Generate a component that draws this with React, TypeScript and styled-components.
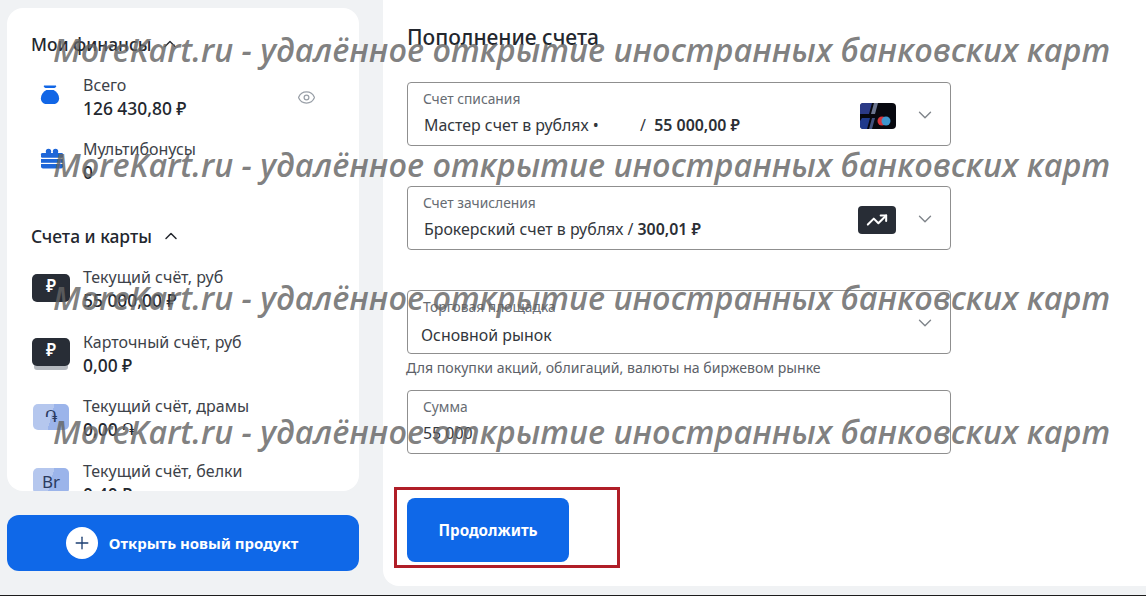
import styled, { createGlobalStyle } from "styled-components";
import { ChevronDown, ChevronUp, Eye, Plus, TrendingUp } from "lucide-react";

const GlobalStyle = createGlobalStyle`
  html, body {
    margin: 0;
    padding: 0;
    background: #fff;
    overflow: hidden;
  }
  * {
    box-sizing: border-box;
  }
  body {
    font-family: "Noto Sans", "Open Sans", sans-serif;
    color: #23272e;
  }
`;

const Page = styled.div`
  position: relative;
  width: 1146px;
  height: 596px;
  display: flex;
  gap: 24px;
  padding-left: 7px;
  background: #f0f2f4;
  border-bottom: 1px solid #1c1c1c;
  overflow: hidden;
`;

const Sidebar = styled.aside`
  width: 352px;
  padding-top: 8px;
  display: flex;
  flex-direction: column;
  gap: 24px;
`;

const Card = styled.div`
  height: 483px;
  padding: 24px 24px 0;
  background: #fff;
  border-radius: 16px;
  overflow: hidden;
`;

const SectionTitle = styled.div`
  display: flex;
  align-items: center;
  gap: 9px;
  height: 24px;
  font-size: 17.4px;
  font-weight: 500;
  color: #23272e;
`;

const Rows = styled.div<{ $gap: number }>`
  display: flex;
  flex-direction: column;
  gap: ${(p) => p.$gap}px;
  margin-top: 18px;
`;

const Row = styled.div`
  height: 46px;
  display: flex;
  align-items: flex-start;
`;

const IconSlot = styled.div<{ $inset?: boolean }>`
  width: 52px;
  flex: none;
  height: 46px;
  display: flex;
  align-items: center;
  padding-left: ${(p) => (p.$inset ? 9 : 1)}px;
  padding-bottom: ${(p) => (p.$inset ? 4 : 0)}px;
`;

const RowText = styled.div`
  flex: 1;
`;

const RowLabel = styled.div`
  font-size: 16px;
  line-height: 22px;
  color: #3d4249;
`;

const RowValue = styled.div`
  font-size: 17.4px;
  line-height: 24px;
  font-weight: 500;
  color: #23272e;
`;

const EyeButton = styled.div`
  width: 38px;
  height: 46px;
  display: flex;
  align-items: center;
  color: #9aa0a8;
`;

const AccountsBlock = styled.div`
  margin-top: 40px;
`;

const AccountRows = styled(Rows)`
  margin-top: 18px;
  gap: 18.6px;
`;

const Tile = styled.div<{ $light?: boolean; $stack?: boolean }>`
  position: relative;
  width: ${(p) => (p.$light ? 36 : 38)}px;
  height: ${(p) => (p.$light ? 26 : 28)}px;
  margin-left: ${(p) => (p.$light ? 1 : 0)}px;
  margin-bottom: 3px;
  padding-bottom: ${(p) => (p.$light ? 0 : 5)}px;
  border-radius: 5px;
  display: flex;
  align-items: center;
  justify-content: center;
  font-size: 17px;
  font-weight: ${(p) => (p.$light ? 400 : 600)};
  color: ${(p) => (p.$light ? "#2a3a5e" : "#fff")};
  background: ${(p) =>
    p.$light
      ? "linear-gradient(105deg, #b5c7ee 0 50%, #9bb4ea 50% 100%)"
      : "#282d36"};
  box-shadow: ${(p) => (p.$stack ? "0 6px 0 -2px #b4b8be" : "none")};
`;

const NewProduct = styled.button`
  height: 56px;
  border: none;
  border-radius: 12px;
  background: #0f68e8;
  color: #fff;
  display: flex;
  align-items: center;
  justify-content: center;
  gap: 11px;
  padding: 0 2px 0 0;
  font-family: inherit;
  font-size: 15px;
  font-weight: 700;
`;

const PlusCircle = styled.span`
  width: 32px;
  height: 32px;
  border-radius: 50%;
  background: #fff;
  color: #1d3f72;
  display: flex;
  align-items: center;
  justify-content: center;
`;

const Main = styled.main`
  flex: 1;
  height: 586px;
  padding: 24px 24px 0;
  background: #fff;
  border-bottom-left-radius: 16px;
`;

const Heading = styled.h1`
  margin: 0 0 32px;
  font-size: 21px;
  line-height: 26px;
  font-weight: 500;
  color: #23272e;
`;

const Form = styled.div`
  width: 544px;
  display: flex;
  flex-direction: column;
`;

const Field = styled.div<{ $after: number }>`
  position: relative;
  height: 64px;
  flex: none;
  margin-bottom: ${(p) => p.$after}px;
  padding: 6px 15px 0;
  border: 1px solid #8f8f8f;
  border-radius: 4px;
  display: flex;
  align-items: flex-start;
`;

const FieldText = styled.div`
  flex: 1;
`;

const FieldLabel = styled.div`
  font-size: 13.8px;
  line-height: 20px;
  color: #666b72;
`;

const FieldValue = styled.div<{ $shift?: number; $top?: number }>`
  margin-top: ${(p) => p.$top ?? 5}px;
  margin-left: ${(p) => p.$shift ?? 1}px;
  font-size: 15.9px;
  line-height: 22px;
  color: #33373d;
  white-space: pre;
  b {
    font-weight: 600;
    color: #2b2f35;
  }
`;

const FieldEnd = styled.div`
  align-self: center;
  margin-top: -5px;
  margin-right: -1px;
  display: flex;
  align-items: center;
  gap: 18px;
  color: #7f848a;
`;

const ProductCard = styled.svg`
  display: block;
  width: 36px;
  height: 26px;
  margin-top: 2px;
`;

const BrokerTile = styled.div`
  width: 38px;
  height: 28px;
  margin-top: 2px;
  border-radius: 4px;
  background: #282d36;
  color: #fff;
  display: flex;
  align-items: center;
  justify-content: center;
`;

const Hint = styled.div`
  height: 36px;
  margin-top: -40px;
  padding-top: 5px;
  margin-left: -1px;
  font-size: 14.1px;
  line-height: 18px;
  color: #5c6168;
`;

const Highlight = styled.div`
  width: 226px;
  height: 81px;
  margin: 33px 0 0 -13px;
  padding: 8px 0 0 10px;
  border: 3px solid #b01e28;
`;

const Continue = styled.button`
  display: flex;
  align-items: center;
  justify-content: center;
  width: 162px;
  height: 64px;
  border: none;
  border-radius: 8px;
  background: #0f68e8;
  color: #fff;
  font-family: inherit;
  font-size: 15.2px;
  font-weight: 700;
`;

const Watermark = styled.div<{ $top: number }>`
  position: absolute;
  left: 53px;
  top: ${(p) => p.$top}px;
  width: 1070px;
  font-family: "Open Sans", "Noto Sans", sans-serif;
  font-size: 32.3px;
  line-height: 40px;
  font-style: italic;
  font-weight: 600;
  color: rgba(100, 100, 100, 0.82);
  white-space: nowrap;
  pointer-events: none;
`;

const BagIcon = () => (
  <svg width="20" height="22" viewBox="0 0 22 24" fill="#1166e6">
    <path d="M5 1.500h12c.8 0 1.200.8.7 1.400l-.7.9c-.3.4-.7.5-1.100.5H6.100c-.4 0-.8-.1-1.100-.5l-.7-.9C3.800 2.300 4.200 1.500 5 1.500z" />
    <path d="M7 6.500h8c3.500 2 6 5.200 6 9 0 4-2.700 6.500-6.500 6.500h-7C3.700 22 1 19.500 1 15.500c0-3.800 2.500-7 6-9z" />
  </svg>
);

const GiftIcon = () => (
  <svg width="24" height="24" viewBox="0 0 24 24" fill="#1e66d8">
    <circle cx="8.500" cy="4.500" r="2.700" />
    <circle cx="15.500" cy="4.500" r="2.700" />
    <rect x="1" y="6" width="22" height="4.800" rx="1.200" />
    <rect x="1" y="12" width="22" height="3.800" />
    <path d="M1 17h22v2.500a2 2 0 0 1-2 2H3a2 2 0 0 1-2-2z" />
  </svg>
);

const accounts = [
  { name: "Текущий счёт, руб", value: "55 000,00 ₽", glyph: "₽" },
  { name: "Карточный счёт, руб", value: "0,00 ₽", glyph: "₽", stack: true },
  { name: "Текущий счёт, драмы", value: "0,00 ֏", glyph: "֏", light: true },
  { name: "Текущий счёт, белки", value: "0,40 ₽", glyph: "Br", light: true },
];

const watermarkTops = [29, 144, 277, 411];

function App() {
  return (
    <Page>
      <GlobalStyle />
      <Sidebar>
        <Card>
          <SectionTitle>
            Мои финансы
            <ChevronUp size={20} strokeWidth={1.6} />
          </SectionTitle>
          <Rows $gap={18}>
            <Row>
              <IconSlot $inset>
                <BagIcon />
              </IconSlot>
              <RowText>
                <RowLabel>Всего</RowLabel>
                <RowValue>126 430,80 ₽</RowValue>
              </RowText>
              <EyeButton>
                <Eye size={19} strokeWidth={1.6} />
              </EyeButton>
            </Row>
            <Row>
              <IconSlot $inset>
                <GiftIcon />
              </IconSlot>
              <RowText>
                <RowLabel>Мультибонусы</RowLabel>
                <RowValue>0</RowValue>
              </RowText>
            </Row>
          </Rows>
          <AccountsBlock>
            <SectionTitle>
              Счета и карты
              <ChevronUp size={20} strokeWidth={1.8} />
            </SectionTitle>
            <AccountRows $gap={18}>
              {accounts.map((a) => (
                <Row key={a.name}>
                  <IconSlot>
                    <Tile $light={a.light} $stack={a.stack}>
                      {a.glyph}
                    </Tile>
                  </IconSlot>
                  <RowText>
                    <RowLabel>{a.name}</RowLabel>
                    <RowValue>{a.value}</RowValue>
                  </RowText>
                </Row>
              ))}
            </AccountRows>
          </AccountsBlock>
        </Card>
        <NewProduct>
          <PlusCircle>
            <Plus size={20} strokeWidth={1.6} />
          </PlusCircle>
          Открыть новый продукт
        </NewProduct>
      </Sidebar>
      <Main>
        <Heading>Пополнение счета</Heading>
        <Form>
          <Field $after={40}>
            <FieldText>
              <FieldLabel>Счет списания</FieldLabel>
              <FieldValue>
                {"Мастер счет в рублях •          /  "}
                <b>55 000,00 ₽</b>
              </FieldValue>
            </FieldText>
            <FieldEnd>
              <ProductCard viewBox="0 0 36 26">
                <rect width="36" height="26" rx="4" fill="#07080f" />
                <path d="M3 0h9L9 11H0V3a3 3 0 0 1 3-3z" fill="#2b3a86" />
                <path d="M14 0h4l-3 11h-4z" fill="#6c7690" />
                <path d="M2 15h8l-3 11H3a3 3 0 0 1-3-3v-5z" fill="#1f3a8c" />
                <path d="M12 15h3l-3 11H9z" fill="#41507e" />
                <circle cx="22" cy="18" r="4.500" fill="#d8343c" />
                <circle cx="26" cy="18" r="4.500" fill="#3e97cf" />
              </ProductCard>
              <ChevronDown size={22} strokeWidth={1.5} />
            </FieldEnd>
          </Field>
          <Field $after={40}>
            <FieldText>
              <FieldLabel>Счет зачисления</FieldLabel>
              <FieldValue>
                {"Брокерский счет в рублях / "}
                <b>300,01 ₽</b>
              </FieldValue>
            </FieldText>
            <FieldEnd>
              <BrokerTile>
                <TrendingUp size={22} strokeWidth={2.2} />
              </BrokerTile>
              <ChevronDown size={22} strokeWidth={1.5} />
            </FieldEnd>
          </Field>
          <Field $after={40}>
            <FieldText>
              <FieldLabel>Торговая площадка</FieldLabel>
              <FieldValue $shift={-2} $top={7}>
                Основной рынок
              </FieldValue>
            </FieldText>
            <FieldEnd>
              <ChevronDown size={22} strokeWidth={1.5} />
            </FieldEnd>
          </Field>
          <Hint>Для покупки акций, облигаций, валюты на биржевом рынке</Hint>
          <Field $after={0}>
            <FieldText>
              <FieldLabel>Сумма</FieldLabel>
              <FieldValue $shift={0}>55 000</FieldValue>
            </FieldText>
          </Field>
          <Highlight>
            <Continue>Продолжить</Continue>
          </Highlight>
        </Form>
      </Main>
      {watermarkTops.map((top) => (
        <Watermark key={top} $top={top}>
          MoreKart.ru - удалённое открытие иностранных банковских карт
        </Watermark>
      ))}
    </Page>
  );
}

export default App;
